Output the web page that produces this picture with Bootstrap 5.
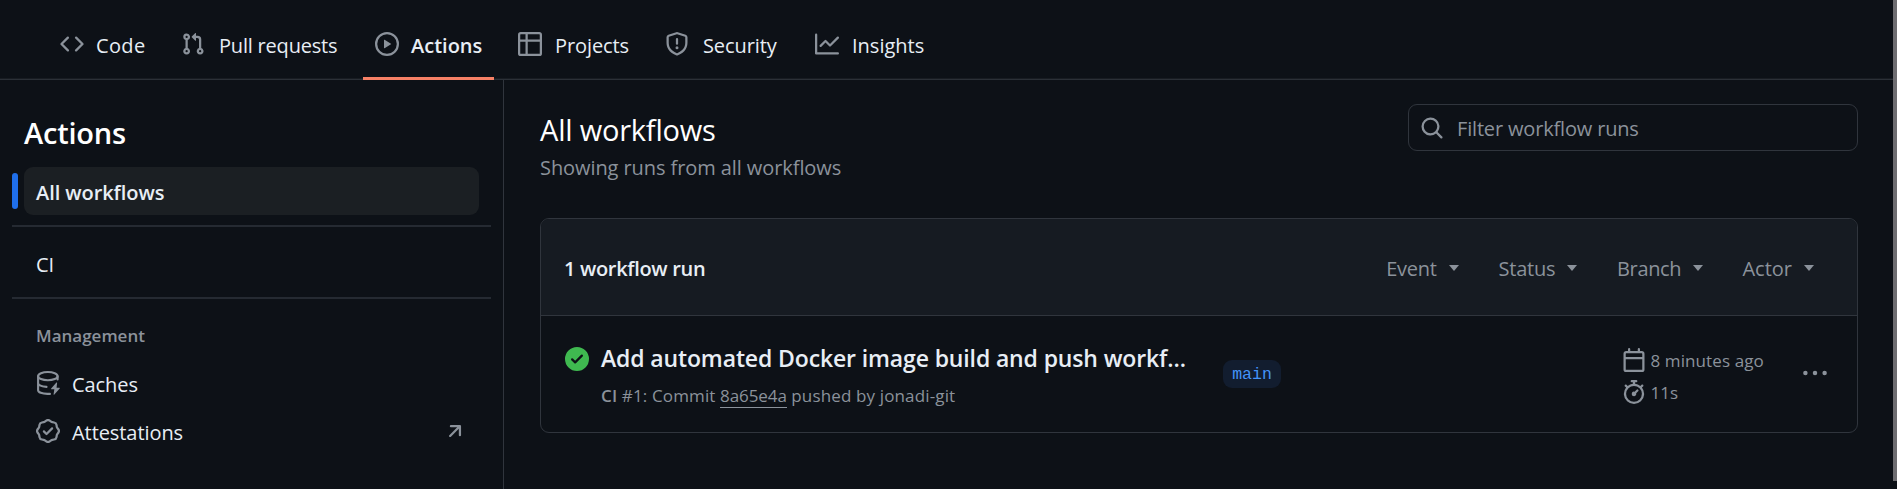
<!DOCTYPE html>
<html lang="en" data-bs-theme="dark">
<head>
<meta charset="utf-8">
<title>Actions</title>
<link href="https://cdn.jsdelivr.net/npm/bootstrap@5.3.0/dist/css/bootstrap.min.css" rel="stylesheet">
<style>
  :root { --gh-bg:#0d1117; --gh-fg:#e8eef5; --gh-muted:#8b929b; --gh-line:#30353d; --gh-soft:#252a32; }
  body { font-family:"Open Sans","Liberation Sans",sans-serif; font-size:20px; line-height:30px; background:var(--gh-bg); color:var(--gh-fg); height:489px; overflow:hidden; }
  svg { display:block; flex:none; fill:var(--gh-muted); }
  .ic { width:24px; height:24px; }
  .shell { width:1893px; height:489px; }
  .thumb { width:4px; height:481px; background:#6e6d71; }
  .topbar { height:80px; padding-left:48px; border-bottom:1px solid #2b3037; box-shadow:inset 0 -1px #181c22; gap:12px; }
  .topbar .nav-link { height:80px; padding:11px 12px 0; gap:12px; color:var(--gh-fg); border-bottom:3px solid transparent; white-space:nowrap; }
  .topbar .nav-link.active { border-color:#f78166; font-weight:600; }
  .topbar .nav-link span { padding-top:3px; }
  .t-code { width:49px; letter-spacing:.35px } .t-pull { width:122px; letter-spacing:-.2px; padding-left:2px }
  .t-act { width:71px; } .t-proj { width:75px; letter-spacing:-.1px; padding-left:1px }
  .t-sec { width:78px; letter-spacing:-.1px; padding-left:2px } .t-ins { width:74px; padding-left:1px }
  .side { width:504px; border-right:1px solid var(--gh-line); padding:33px 12px 0; }
  .side h2 { font-size:29px; line-height:40px; font-weight:600; letter-spacing:-.2px; margin:0 0 14px 12px; }
  .side-item { height:48px; padding:2px 12px 0; margin:0 12px; border-radius:9px; color:var(--gh-fg); letter-spacing:-.07px; }
  .side-item.active { background:#1b1f23; font-weight:600; position:relative; padding-top:4px; }
  .side-item.active::before { content:""; position:absolute; left:-12px; top:6px; width:6px; height:36px; border-radius:9px; background:#1f6feb; }
  .side-item .ic { margin-top:-4px; }
  .rule { height:2px; background:var(--gh-soft); }
  .group { font-size:17px; line-height:24px; font-weight:600; color:var(--gh-muted); margin:25px 24px 12px; }
  .pane { padding:24px 35px 0 36px; }
  .pane h1 { font-size:29px; line-height:40px; font-weight:400; letter-spacing:-.21px; margin:6px 0 0; }
  .muted { color:var(--gh-muted); }
  .search { width:450px; height:47px; border:1px solid var(--gh-line); border-radius:9px; padding-left:11px; gap:13px; }
  .search span { letter-spacing:-.17px; padding-top:3px; }
  .runs { border:1px solid var(--gh-line); border-radius:9px; margin-top:35px; height:215px; overflow:hidden; }
  .runs-head { height:97px; background:#161b22; border-bottom:1px solid var(--gh-line); padding:4px 43px 0 23px; }
  .runs-head b { font-weight:600; letter-spacing:-.32px; }
  .caret { width:0; height:0; border:5.8px solid transparent; border-top:6px solid var(--gh-muted); border-bottom:0; margin-top:-3px; }
  .filter { gap:12px; }
  .run { height:117px; padding-left:24px; }
  .run-title { font-size:23px; line-height:32px; font-weight:600; letter-spacing:-.13px; }
  .meta { font-size:17px; line-height:24px; color:var(--gh-muted); letter-spacing:.14px; }
  .sha { border-bottom:1px solid var(--gh-muted); letter-spacing:-.1px; display:inline-block; line-height:23px; }
  .branch { font-family:"Liberation Mono",monospace; font-size:16.5px; line-height:29px; height:28px; width:58px; border-radius:9px; background:#121d2f; color:#4493f8; }
  .when { font-size:17px; line-height:24px; color:var(--gh-muted); }
</style>
</head>
<body>
<div class="d-flex">
<div class="shell d-flex flex-column">
  <nav class="topbar nav flex-nowrap flex-shrink-0">
    <a class="nav-link d-flex align-items-center" href="#"><svg class="ic" viewBox="0 0 16 16"><path d="M4.72 3.22a.75.75 0 0 1 1.06 1.06L2.06 8l3.72 3.72a.75.75 0 1 1-1.06 1.06L.47 8.53a.75.75 0 0 1 0-1.06l4.25-4.25Zm6.56 0a.75.75 0 1 0-1.06 1.06L13.94 8l-3.72 3.72a.75.75 0 1 0 1.06 1.06l4.25-4.25a.75.75 0 0 0 0-1.06l-4.25-4.25Z"/></svg><span class="t-code">Code</span></a>
    <a class="nav-link d-flex align-items-center" href="#"><svg class="ic" viewBox="0 0 16 16"><path d="M1.5 3.25a2.25 2.25 0 1 1 3 2.122v5.256a2.251 2.251 0 1 1-1.5 0V5.372A2.25 2.25 0 0 1 1.5 3.25Zm5.677-.177L9.573.677A.25.25 0 0 1 10 .854V2.5h1A2.5 2.5 0 0 1 13.5 5v5.628a2.251 2.251 0 1 1-1.5 0V5a1 1 0 0 0-1-1h-1v1.646a.25.25 0 0 1-.427.177L7.177 3.427a.25.25 0 0 1 0-.354ZM3.75 2.5a.75.75 0 1 0 0 1.5.75.75 0 0 0 0-1.5Zm0 9.5a.75.75 0 1 0 0 1.5.75.75 0 0 0 0-1.5Zm8.25.75a.75.75 0 1 0 1.5 0 .75.75 0 0 0-1.5 0Z"/></svg><span class="t-pull">Pull requests</span></a>
    <a class="nav-link active d-flex align-items-center" href="#"><svg class="ic" viewBox="0 0 16 16"><path d="M8 0a8 8 0 1 1 0 16A8 8 0 0 1 8 0ZM1.5 8a6.5 6.5 0 1 0 13 0 6.5 6.5 0 0 0-13 0Zm4.879-2.773 4.264 2.559a.25.25 0 0 1 0 .428l-4.264 2.559A.25.25 0 0 1 6 10.559V5.442a.25.25 0 0 1 .379-.215Z"/></svg><span class="t-act">Actions</span></a>
    <a class="nav-link d-flex align-items-center" href="#"><svg class="ic" viewBox="0 0 16 16"><path d="M0 1.75C0 .784.784 0 1.75 0h12.5C15.216 0 16 .784 16 1.75v12.5A1.75 1.75 0 0 1 14.25 16H1.75A1.75 1.75 0 0 1 0 14.25ZM6.5 6.5v8h7.75a.25.25 0 0 0 .25-.25V6.5Zm8-1.5V1.75a.25.25 0 0 0-.25-.25H6.5V5Zm-13 1.5v7.75c0 .138.112.25.25.25H5v-8ZM5 5V1.5H1.75a.25.25 0 0 0-.25.25V5Z"/></svg><span class="t-proj">Projects</span></a>
    <a class="nav-link d-flex align-items-center" href="#"><svg class="ic" viewBox="0 0 16 16"><path d="M7.467.133a1.748 1.748 0 0 1 1.066 0l5.25 1.68A1.75 1.75 0 0 1 15 3.48V7c0 1.566-.32 3.182-1.303 4.682-.983 1.498-2.585 2.813-5.032 3.855a1.697 1.697 0 0 1-1.33 0c-2.447-1.042-4.049-2.357-5.032-3.855C1.32 10.182 1 8.566 1 7V3.48a1.75 1.75 0 0 1 1.217-1.667Zm.61 1.429a.25.25 0 0 0-.153 0l-5.25 1.68a.25.25 0 0 0-.174.238V7c0 1.358.275 2.666 1.057 3.86.784 1.194 2.121 2.34 4.366 3.297a.196.196 0 0 0 .154 0c2.245-.956 3.582-2.104 4.366-3.298C13.225 9.666 13.5 8.36 13.5 7V3.48a.251.251 0 0 0-.174-.237l-5.25-1.68ZM8.75 4.75v3a.75.75 0 0 1-1.5 0v-3a.75.75 0 0 1 1.5 0ZM9 10.5a1 1 0 1 1-2 0 1 1 0 0 1 2 0Z"/></svg><span class="t-sec">Security</span></a>
    <a class="nav-link d-flex align-items-center" href="#"><svg class="ic" viewBox="0 0 16 16"><path d="M1.5 1.75V13.5h13.75a.75.75 0 0 1 0 1.5H.75a.75.75 0 0 1-.75-.75V1.75a.75.75 0 0 1 1.5 0Zm14.28 2.53-5.25 5.25a.75.75 0 0 1-1.06 0L7 7.06 4.28 9.78a.751.751 0 0 1-1.042-.018.751.751 0 0 1-.018-1.042l3.25-3.25a.75.75 0 0 1 1.06 0L10 7.94l4.72-4.72a.751.751 0 0 1 1.042.018.751.751 0 0 1 .018 1.042Z"/></svg><span class="t-ins">Insights</span></a>
  </nav>
  <div class="d-flex flex-grow-1">
    <aside class="side flex-shrink-0">
      <h2>Actions</h2>
      <a class="side-item active d-flex align-items-center text-decoration-none" href="#">All workflows</a>
      <div class="rule" style="margin:10px 0 13px"></div>
      <a class="side-item d-flex align-items-center text-decoration-none" href="#">CI</a>
      <div class="rule" style="margin:9px 0 0"></div>
      <div class="group">Management</div>
      <a class="side-item d-flex align-items-center text-decoration-none gap-2 pe-2" href="#"><svg class="ic me-1" viewBox="0 0 16 16"><g fill="none" stroke="#8b929b" stroke-width="1.4" stroke-linecap="round"><ellipse cx="7.9" cy="3.45" rx="6.5" ry="2.75"/><path d="M1.4 3.45v9.3c0 1.4 2.6 2.5 6.2 2.5h1.7M1.4 8c0 1.4 2.2 2.3 5.6 2.6M14.4 3.45v2.2"/></g><path d="M13.6 7.7 10.1 11.6a.3.3 0 0 0 .22.5h1.9l-.5 3.4a.28.28 0 0 0 .5.2l3.6-4.1a.3.3 0 0 0-.22-.5h-1.9l.4-3.2a.28.28 0 0 0-.5-.2Z"/></svg>Caches</a>
      <a class="side-item d-flex align-items-center text-decoration-none gap-2" href="#"><svg class="ic me-1" viewBox="0 0 16 16"><path fill-rule="evenodd" d="M9.585.52l.929.68c.153.112.331.186.518.215l1.138.175a2.678 2.678 0 0 1 2.24 2.24l.174 1.139c.029.187.103.365.215.518l.68.928a2.677 2.677 0 0 1 0 3.17l-.68.928a1.174 1.174 0 0 0-.215.518l-.175 1.138a2.678 2.678 0 0 1-2.241 2.241l-1.138.175a1.17 1.17 0 0 0-.518.215l-.928.68a2.677 2.677 0 0 1-3.17 0l-.928-.68a1.174 1.174 0 0 0-.518-.215L3.83 14.41a2.678 2.678 0 0 1-2.24-2.24l-.175-1.138a1.17 1.17 0 0 0-.215-.518l-.68-.928a2.677 2.677 0 0 1 0-3.17l.68-.928c.112-.153.186-.331.215-.518l.175-1.14a2.678 2.678 0 0 1 2.24-2.24l1.139-.175c.187-.029.365-.103.518-.215l.928-.68a2.677 2.677 0 0 1 3.17 0ZM7.303 1.728l-.927.68a2.67 2.67 0 0 1-1.18.489l-1.137.174a1.179 1.179 0 0 0-.987.987l-.174 1.136a2.677 2.677 0 0 1-.489 1.18l-.68.928a1.18 1.18 0 0 0 0 1.394l.68.927c.256.348.424.753.489 1.18l.174 1.137c.078.509.478.909.987.987l1.136.174a2.67 2.67 0 0 1 1.18.489l.928.68c.414.305.979.305 1.394 0l.927-.68a2.67 2.67 0 0 1 1.18-.489l1.137-.174a1.18 1.18 0 0 0 .987-.987l.174-1.136a2.67 2.67 0 0 1 .489-1.18l.68-.928a1.176 1.176 0 0 0 0-1.394l-.68-.927a2.686 2.686 0 0 1-.489-1.18l-.174-1.137a1.179 1.179 0 0 0-.987-.987l-1.136-.174a2.677 2.677 0 0 1-1.18-.489l-.928-.68a1.176 1.176 0 0 0-1.394 0Z"/><path d="M11.28 6.78l-3.75 3.75a.75.75 0 0 1-1.06 0L4.72 8.78a.751.751 0 0 1 .018-1.042.751.751 0 0 1 1.042-.018L7 8.94l3.22-3.22a.751.751 0 0 1 1.042.018.751.751 0 0 1 .018 1.042Z"/></svg>Attestations<svg class="ic ms-auto" viewBox="0 0 16 16"><path d="M4.53 4.75A.75.75 0 0 1 5.28 4h6.01a.75.75 0 0 1 .75.75v6.01a.75.75 0 0 1-1.5 0v-4.2l-5.26 5.261a.749.749 0 0 1-1.275-.326.749.749 0 0 1 .215-.734L9.48 5.5h-4.2a.75.75 0 0 1-.75-.75Z"/></svg></a>
    </aside>
    <main class="pane flex-grow-1">
      <header class="d-flex justify-content-between align-items-start">
        <div>
          <h1>All workflows</h1>
          <div class="muted" style="margin-top:3px;letter-spacing:-.08px">Showing runs from all workflows</div>
        </div>
        <div class="search d-flex align-items-center muted"><svg class="ic" viewBox="0 0 16 16"><path d="M10.68 11.74a6 6 0 0 1-7.922-8.982 6 6 0 0 1 8.982 7.922l3.04 3.04a.749.749 0 0 1-.326 1.275.749.749 0 0 1-.734-.215ZM11.5 7a4.499 4.499 0 1 0-8.997 0A4.499 4.499 0 0 0 11.5 7Z"/></svg><span>Filter workflow runs</span></div>
      </header>
      <section class="runs">
        <div class="runs-head d-flex align-items-center justify-content-between">
          <b>1 workflow run</b>
          <div class="d-flex muted">
            <div class="filter d-flex align-items-center" style="width:112.3px;letter-spacing:-.25px">Event<i class="caret"></i></div>
            <div class="filter d-flex align-items-center" style="width:118.5px;letter-spacing:-.25px">Status<i class="caret"></i></div>
            <div class="filter d-flex align-items-center" style="width:125.4px;letter-spacing:-.35px">Branch<i class="caret"></i></div>
            <div class="filter d-flex align-items-center">Actor<i class="caret"></i></div>
          </div>
        </div>
        <div class="run d-flex">
          <svg class="ic" style="margin-top:31px;fill:#3fb950" viewBox="0 0 16 16"><path d="M8 16A8 8 0 1 1 8 0a8 8 0 0 1 0 16Zm3.78-9.72a.751.751 0 0 0-.018-1.042.751.751 0 0 0-1.042-.018L6.75 9.19 5.28 7.72a.751.751 0 0 0-1.042.018.751.751 0 0 0-.018 1.042l2 2a.75.75 0 0 0 1.06 0Z"/></svg>
          <div style="width:622px;margin-left:12px;padding-top:26px">
            <div class="run-title text-nowrap">Add automated Docker image build and push workf…</div>
            <div class="meta" style="margin-top:10px"><b class="fw-semibold">CI</b> #1: Commit <span class="sha">8a65e4a</span> pushed by jonadi-git</div>
          </div>
          <div class="branch text-center" style="margin-top:44px">main</div>
          <div class="when" style="margin:32px 0 0 341px;width:180.5px">
            <div class="d-flex" style="height:32px;gap:4.5px"><svg class="ic" viewBox="0 0 16 16"><path d="M4.75 0a.75.75 0 0 1 .75.75V2h5V.75a.75.75 0 0 1 1.5 0V2h1.25c.966 0 1.75.784 1.75 1.75v10.5A1.75 1.75 0 0 1 13.25 16H2.75A1.75 1.75 0 0 1 1 14.25V3.75C1 2.784 1.784 2 2.75 2H4V.75A.75.75 0 0 1 4.75 0ZM2.5 7.5v6.75c0 .138.112.25.25.25h10.5a.25.25 0 0 0 .25-.25V7.5Zm10.75-4H2.75a.25.25 0 0 0-.25.25V6h11V3.75a.25.25 0 0 0-.25-.25Z"/></svg><span style="letter-spacing:.1px;padding-top:1px">8 minutes ago</span></div>
            <div class="d-flex" style="gap:4.5px"><svg class="ic" viewBox="0 0 16 16"><path d="M5.75.75A.75.75 0 0 1 6.5 0h3a.75.75 0 0 1 0 1.5h-.75v1l-.001.041a6.724 6.724 0 0 1 3.464 1.435l.007-.006.75-.75a.749.749 0 0 1 1.275.326.749.749 0 0 1-.215.734l-.75.75-.006.007a6.75 6.75 0 1 1-10.548 0L2.72 5.03l-.75-.75a.751.751 0 0 1 .018-1.042.751.751 0 0 1 1.042-.018l.75.75.007.006A6.72 6.72 0 0 1 7.25 2.541V1.5H6.5a.75.75 0 0 1-.75-.75ZM8 14.5a5.25 5.25 0 1 0-.001-10.501A5.25 5.25 0 0 0 8 14.5Zm.389-6.7 1.33-1.33a.75.75 0 1 1 1.061 1.06L9.45 8.861A1.503 1.503 0 0 1 8 10.75a1.499 1.499 0 1 1 .389-2.95Z"/></svg><span style="padding-top:1px">11s</span></div>
          </div>
          <svg class="ic" style="margin-top:45px" viewBox="0 0 16 16"><circle cx="1.6" cy="8" r="1.5"/><circle cx="8" cy="8" r="1.5"/><circle cx="14.4" cy="8" r="1.5"/></svg>
        </div>
      </section>
    </main>
  </div>
</div>
<div class="thumb"></div>
</div>
<script src="https://cdn.jsdelivr.net/npm/bootstrap@5.3.0/dist/js/bootstrap.bundle.min.js"></script>
</body>
</html>
